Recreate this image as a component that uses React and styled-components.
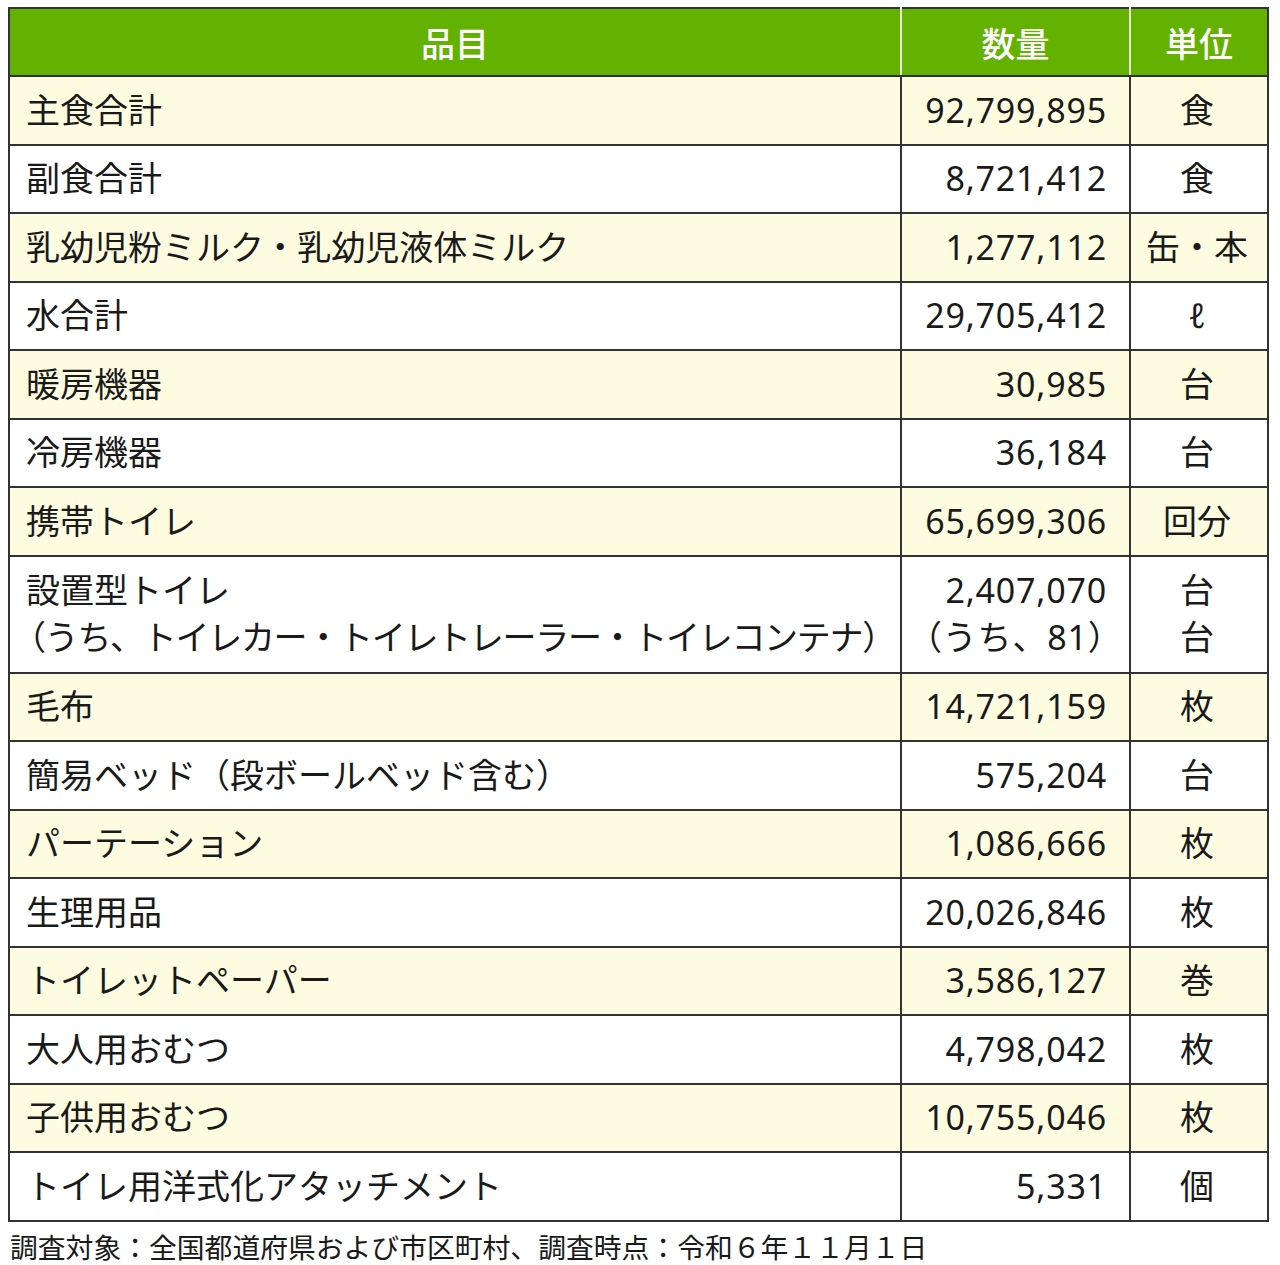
import React from 'react';
import styled, { createGlobalStyle } from 'styled-components';

const GlobalStyle = createGlobalStyle`
  body {
    margin: 0;
    background: #ffffff;
    font-family: 'Noto Sans', 'Noto Sans CJK JP', sans-serif;
    color: #1a1a1a;
  }
`;

const Page = styled.div`
  width: 1280px;
  padding: 7px 0 0 8px;
  box-sizing: border-box;
`;

const Table = styled.table`
  width: 1259px;
  border-collapse: collapse;
  table-layout: fixed;
  border: 2px solid #333333;
`;

const HeadCell = styled.th`
  background: #63b100;
  color: #ffffff;
  font-weight: 500;
  font-size: 34px;
  height: 66px;
  padding: 0;
  text-align: center;
  border-left: 2px solid #e8f3dc;
  border-bottom: 2px solid #333333;
  font-family: 'Noto Sans CJK JP', sans-serif;
  &:first-child {
    border-left: none;
  }
`;

const Row = styled.tr`
  background: ${p => (p.$shaded ? '#fefce0' : '#ffffff')};
`;

const Cell = styled.td`
  border: 2px solid #333333;
  font-size: 34px;
  line-height: 47px;
  height: ${p => (p.$tall ? '115px' : '66.5px')};
  padding: 0 ${p => (p.$align === 'right' ? '22px' : '10px')} 0 ${p => (p.$align === 'left' ? '16px' : '6px')};
  text-align: ${p => p.$align};
  vertical-align: middle;
  letter-spacing: ${p => (p.$num ? '0.8px' : '0')};
  white-space: nowrap;
`;

const Line = styled.div`
  letter-spacing: ${p => (p.$tight ? '-1.3px' : 'inherit')};
  margin-left: ${p => (p.$tight ? '-14px' : '0')};
`;

const Note = styled.p`
  margin: 4px 0 0 2px;
  font-family: 'Noto Sans CJK JP', sans-serif;
  font-size: 27.8px;
  line-height: 40px;
  color: #1a1a1a;
`;

const rows = [
  ['主食合計', '92,799,895', '食'],
  ['副食合計', '8,721,412', '食'],
  ['乳幼児粉ミルク・乳幼児液体ミルク', '1,277,112', '缶・本'],
  ['水合計', '29,705,412', 'ℓ'],
  ['暖房機器', '30,985', '台'],
  ['冷房機器', '36,184', '台'],
  ['携帯トイレ', '65,699,306', '回分'],
  [
    ['設置型トイレ', '（うち、トイレカー・トイレトレーラー・トイレコンテナ）'],
    ['2,407,070', '（うち、81）'],
    ['台', '台'],
  ],
  ['毛布', '14,721,159', '枚'],
  ['簡易ベッド（段ボールベッド含む）', '575,204', '台'],
  ['パーテーション', '1,086,666', '枚'],
  ['生理用品', '20,026,846', '枚'],
  ['トイレットペーパー', '3,586,127', '巻'],
  ['大人用おむつ', '4,798,042', '枚'],
  ['子供用おむつ', '10,755,046', '枚'],
  ['トイレ用洋式化アタッチメント', '5,331', '個'],
];

const lines = (v, tightSecond) =>
  Array.isArray(v)
    ? v.map((l, i) => (
        <Line key={i} $tight={tightSecond && i === 1}>
          {l}
        </Line>
      ))
    : v;

export default function App() {
  return (
    <Page>
      <GlobalStyle />
      <Table>
        <colgroup>
          <col style={{ width: 892 }} />
          <col style={{ width: 229 }} />
          <col style={{ width: 138 }} />
        </colgroup>
        <thead>
          <tr>
            <HeadCell>品目</HeadCell>
            <HeadCell>数量</HeadCell>
            <HeadCell>単位</HeadCell>
          </tr>
        </thead>
        <tbody>
          {rows.map(([name, qty, unit], i) => {
            const tall = Array.isArray(name);
            return (
              <Row key={i} $shaded={i % 2 === 0}>
                <Cell $align="left" $tall={tall}>{lines(name, true)}</Cell>
                <Cell $align="right" $num $tall={tall}>{lines(qty)}</Cell>
                <Cell $align="center" $tall={tall}>{lines(unit)}</Cell>
              </Row>
            );
          })}
        </tbody>
      </Table>
      <Note>調査対象：全国都道府県および市区町村、調査時点：令和６年１１月１日</Note>
    </Page>
  );
}
